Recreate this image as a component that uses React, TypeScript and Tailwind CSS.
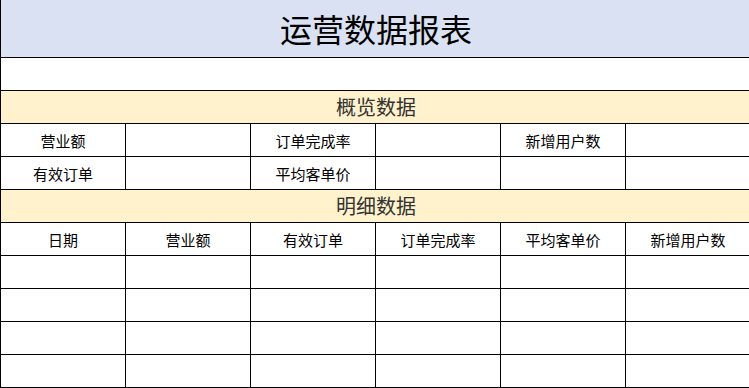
import React from "react";

const font = { fontFamily: '"Noto Sans CJK SC", "Noto Sans", sans-serif' };

function Row({ cells, header }: { cells: string[]; header?: boolean }) {
  return (
    <div className="flex h-[33px] border-b border-l border-black">
      {cells.map((c, i) => (
        <div
          key={i}
          className="flex w-[125px] shrink-0 items-center justify-center border-r border-black text-[15px] leading-none text-black"
        >
          {c}
        </div>
      ))}
    </div>
  );
}

export default function App() {
  const empty = ["", "", "", "", "", ""];
  return (
    <div className="w-[749px] h-[388px] overflow-hidden bg-white" style={font}>
      <div className="w-[751px]">
        <div className="flex h-[58px] items-center justify-center border-b border-l border-black bg-[#d9e1f2] pb-[1px] text-[32px] leading-none text-black">
          运营数据报表
        </div>
        <div className="h-[33px] border-b border-l border-black bg-white" />
        <div className="flex h-[33px] items-center justify-center border-b border-l border-black bg-[#fff2cc] text-[20px] leading-none text-[#333333]">
          概览数据
        </div>
        <Row cells={["营业额", "", "订单完成率", "", "新增用户数", ""]} />
        <Row cells={["有效订单", "", "平均客单价", "", "", ""]} />
        <div className="flex h-[33px] items-center justify-center border-b border-l border-black bg-[#fff2cc] text-[20px] leading-none text-[#333333]">
          明细数据
        </div>
        <Row cells={["日期", "营业额", "有效订单", "订单完成率", "平均客单价", "新增用户数"]} />
        <Row cells={empty} />
        <Row cells={empty} />
        <Row cells={empty} />
        <Row cells={empty} />
      </div>
    </div>
  );
}
